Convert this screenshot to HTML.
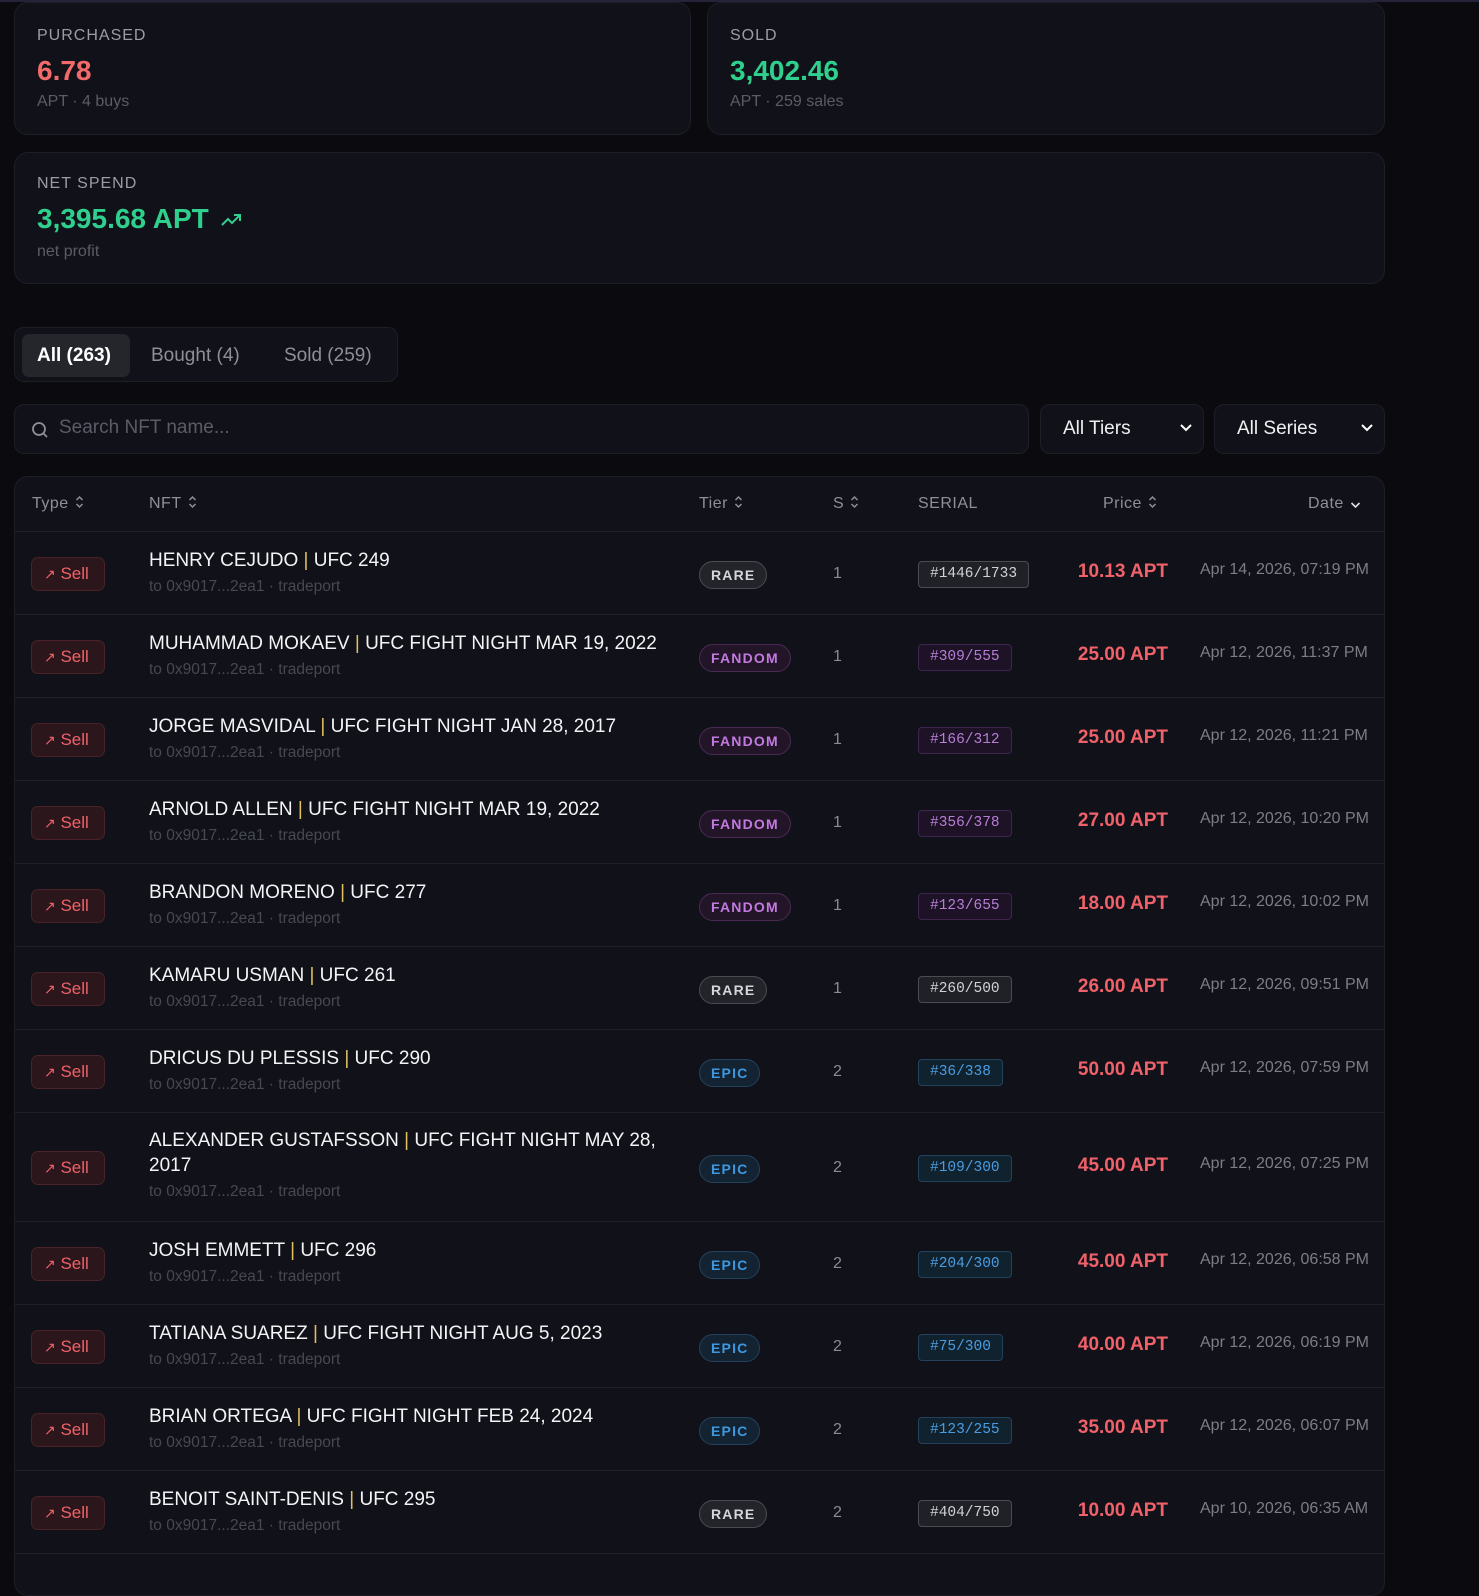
<!DOCTYPE html>
<html><head><meta charset="utf-8"><style>
*{box-sizing:border-box;margin:0;padding:0}
body{width:1479px;height:1582px;background:#0b0b0f;font-family:"Liberation Sans",sans-serif;position:relative;overflow:hidden;color:#e6e7ea}
.topline{position:absolute;left:0;top:0;width:1479px;height:2px;background:#25233a}
.card{position:absolute;background:#111219;border:1px solid #1d1e26;border-radius:14px}
.lbl{position:absolute;left:22px;font-size:16px;letter-spacing:1px;color:#9a9ca6}
.big{position:absolute;left:22px;font-size:28px;font-weight:bold}
.sub{position:absolute;left:22px;font-size:16px;color:#5a5c66}
.tabs{position:absolute;left:14px;top:327px;width:384px;height:55px;background:#111219;border:1px solid #1d1e26;border-radius:10px}
.tab{position:absolute;top:6px;height:43px;line-height:43px;font-size:19px;color:#8d8f99}
.search{position:absolute;left:14px;top:404px;width:1015px;height:50px;background:#111219;border:1px solid #1d1e26;border-radius:10px}
.sel{position:absolute;top:404px;height:50px;background:#111219;border:1px solid #1d1e26;border-radius:10px;font-size:19px;color:#f0f0f2;line-height:48px;padding-left:22px}
.sel svg{position:absolute;right:10px;top:18px}
.table{position:absolute;left:14px;top:476px;width:1371px;height:1120px;background:#111219;border:1px solid #1d1e26;border-radius:14px;overflow:hidden}
.th{position:absolute;top:18px;font-size:16px;color:#8d8f99;letter-spacing:.5px;white-space:nowrap}
.th svg{margin-left:6px;vertical-align:-1px}
.row{position:absolute;left:0;width:1371px;border-top:1px solid #1e1f27}
.sell{position:absolute;left:16px;width:74px;height:34px;border:1px solid #4a2228;background:#2a161b;border-radius:7px;color:#f0626a;font-size:17px;line-height:32px;padding-left:12px}
.nft{position:absolute;left:134px;width:530px}
.nm{font-size:19px;line-height:25px;color:#f4f4f6}
.nm b{font-weight:normal;color:#e0c060}
.sb{font-size:15.5px;line-height:27px;color:#464852}
.tier{position:absolute;left:684px;height:28px;border-radius:14px;font-size:14px;font-weight:bold;letter-spacing:1.2px;line-height:26px;padding:0 11px}
.rare{background:#22242a;border:1px solid #4a4c55;color:#d4d6dc}
.fan{background:#231528;border:1px solid #4a2a55;color:#c27ae0}
.epic{background:#132332;border:1px solid #23415c;color:#3e98e0}
.s{position:absolute;left:818px;font-size:16px;color:#8a8c95}
.ser{position:absolute;left:903px;height:27px;border-radius:4px;font-family:"Liberation Mono",monospace;font-size:14.5px;line-height:25px;padding:0 11px}
.sr{background:#1f2126;border:1px solid #4a4c55;color:#d0d2d8}
.sf{background:#1e1226;border:1px solid #3d2550;color:#b77ed6}
.se{background:#11222f;border:1px solid #23415c;color:#4a9ce0}
.pr{position:absolute;right:218px;font-size:19px;font-weight:bold;color:#f0616a}
.dt{position:absolute;left:1185px;font-size:16px;color:#7b7d87;white-space:nowrap}
</style></head><body>
<div class="topline"></div>
<div class="card" style="left:14px;top:2px;width:677px;height:133px">
<div class="lbl" style="top:24px">PURCHASED</div>
<div class="big" style="top:52px;color:#f26a6a">6.78</div>
<div class="sub" style="top:90px">APT · 4 buys</div></div>
<div class="card" style="left:707px;top:2px;width:678px;height:133px">
<div class="lbl" style="top:24px">SOLD</div>
<div class="big" style="top:52px;color:#2fd08e">3,402.46</div>
<div class="sub" style="top:90px">APT · 259 sales</div></div>
<div class="card" style="left:14px;top:152px;width:1371px;height:132px">
<div class="lbl" style="top:22px">NET SPEND</div>
<div class="big" style="top:50px;color:#2fd08e">3,395.68 APT <svg width="22" height="16" viewBox="0 0 22 16" style="margin-left:4px"><path d="M1 13 L7 7 L11 11 L19 3 M13 3 H19 V9" stroke="#2fd08e" stroke-width="2" fill="none"/></svg></div>
<div class="sub" style="top:90px">net profit</div></div>
<div class="tabs">
<div class="tab" style="left:7px;width:108px;background:#25262c;border-radius:7px;color:#fff;font-weight:bold;padding-left:15px">All (263)</div>
<div class="tab" style="left:136px">Bought (4)</div>
<div class="tab" style="left:269px">Sold (259)</div></div>
<div class="search"><svg width="18" height="18" viewBox="0 0 18 18" style="position:absolute;left:16px;top:16px"><circle cx="8" cy="8" r="6" stroke="#8d8f99" stroke-width="1.8" fill="none"/><path d="M12.5 12.5 L16 16" stroke="#8d8f99" stroke-width="1.8"/></svg><span style="position:absolute;left:44px;top:12px;font-size:19px;color:#5a5c66">Search NFT name...</span></div>
<div class="sel" style="left:1040px;width:164px">All Tiers<svg width="14" height="10" viewBox="0 0 14 10"><path d="M2 2 L7 7 L12 2" stroke="#fff" stroke-width="2" fill="none"/></svg></div>
<div class="sel" style="left:1214px;width:171px">All Series<svg width="14" height="10" viewBox="0 0 14 10"><path d="M2 2 L7 7 L12 2" stroke="#fff" stroke-width="2" fill="none"/></svg></div>
<div class="table" id="tbl">
<div id="rows"></div>
</div>
<script>
var ud='<svg width="9" height="14" viewBox="0 0 9 14"><path d="M1.5 5 L4.5 2 L7.5 5 M1.5 9 L4.5 12 L7.5 9" stroke="#8d8f99" stroke-width="1.5" fill="none"/></svg>';
var dn='<svg width="11" height="8" viewBox="0 0 11 8"><path d="M1.5 2 L5.5 6 L9.5 2" stroke="#e0e0e4" stroke-width="1.6" fill="none"/></svg>';
var hd='<div class="th" style="left:17px">Type'+ud+'</div><div class="th" style="left:134px">NFT'+ud+'</div><div class="th" style="left:684px">Tier'+ud+'</div><div class="th" style="left:818px">S'+ud+'</div><div class="th" style="left:903px">SERIAL</div><div class="th" style="left:1088px">Price'+ud+'</div><div class="th" style="left:1293px">Date'+dn+'</div>';
var d=[
["HENRY CEJUDO","UFC 249","rare","1","#1446/1733","10.13 APT","Apr 14, 2026, 07:19 PM"],
["MUHAMMAD MOKAEV","UFC FIGHT NIGHT MAR 19, 2022","fan","1","#309/555","25.00 APT","Apr 12, 2026, 11:37 PM"],
["JORGE MASVIDAL","UFC FIGHT NIGHT JAN 28, 2017","fan","1","#166/312","25.00 APT","Apr 12, 2026, 11:21 PM"],
["ARNOLD ALLEN","UFC FIGHT NIGHT MAR 19, 2022","fan","1","#356/378","27.00 APT","Apr 12, 2026, 10:20 PM"],
["BRANDON MORENO","UFC 277","fan","1","#123/655","18.00 APT","Apr 12, 2026, 10:02 PM"],
["KAMARU USMAN","UFC 261","rare","1","#260/500","26.00 APT","Apr 12, 2026, 09:51 PM"],
["DRICUS DU PLESSIS","UFC 290","epic","2","#36/338","50.00 APT","Apr 12, 2026, 07:59 PM"],
["ALEXANDER GUSTAFSSON","UFC FIGHT NIGHT MAY 28, 2017","epic","2","#109/300","45.00 APT","Apr 12, 2026, 07:25 PM"],
["JOSH EMMETT","UFC 296","epic","2","#204/300","45.00 APT","Apr 12, 2026, 06:58 PM"],
["TATIANA SUAREZ","UFC FIGHT NIGHT AUG 5, 2023","epic","2","#75/300","40.00 APT","Apr 12, 2026, 06:19 PM"],
["BRIAN ORTEGA","UFC FIGHT NIGHT FEB 24, 2024","epic","2","#123/255","35.00 APT","Apr 12, 2026, 06:07 PM"],
["BENOIT SAINT-DENIS","UFC 295","rare","2","#404/750","10.00 APT","Apr 10, 2026, 06:35 AM"],
["","","","","","",""]];
var tn={rare:"RARE",fan:"FANDOM",epic:"EPIC"},sc={rare:"sr",fan:"sf",epic:"se"};
var h=hd,yy=54;
for(var i=0;i<d.length;i++){var r=d[i];var H=r[0]=="ALEXANDER GUSTAFSSON"?109:83;
if(!r[0]){h+='<div class="row" style="top:'+yy+'px;height:83px"></div>';continue;}
var c=H/2;
h+='<div class="row" style="top:'+yy+'px;height:'+H+'px">'+
'<div class="sell" style="top:'+(c-17)+'px"><span style="font-size:14px">↗</span> Sell</div>'+
'<div class="nft" style="top:'+(c-(H>90?40:26))+'px"><div class="nm">'+r[0]+' <b>|</b> '+r[1]+'</div><div class="sb">to 0x9017...2ea1 · tradeport</div></div>'+
'<div class="tier '+r[2]+'" style="top:'+(c-13)+'px">'+tn[r[2]]+'</div>'+
'<div class="s" style="top:'+(c-9)+'px">'+r[3]+'</div>'+
'<div class="ser '+sc[r[2]]+'" style="top:'+(c-13)+'px">'+r[4]+'</div>'+
'<div class="pr" style="top:'+(c-13)+'px">'+r[5]+'</div>'+
'<div class="dt" style="top:'+(c-13)+'px">'+r[6]+'</div></div>';
yy+=H;}
document.getElementById("tbl").innerHTML=h;
</script>
</body></html>
